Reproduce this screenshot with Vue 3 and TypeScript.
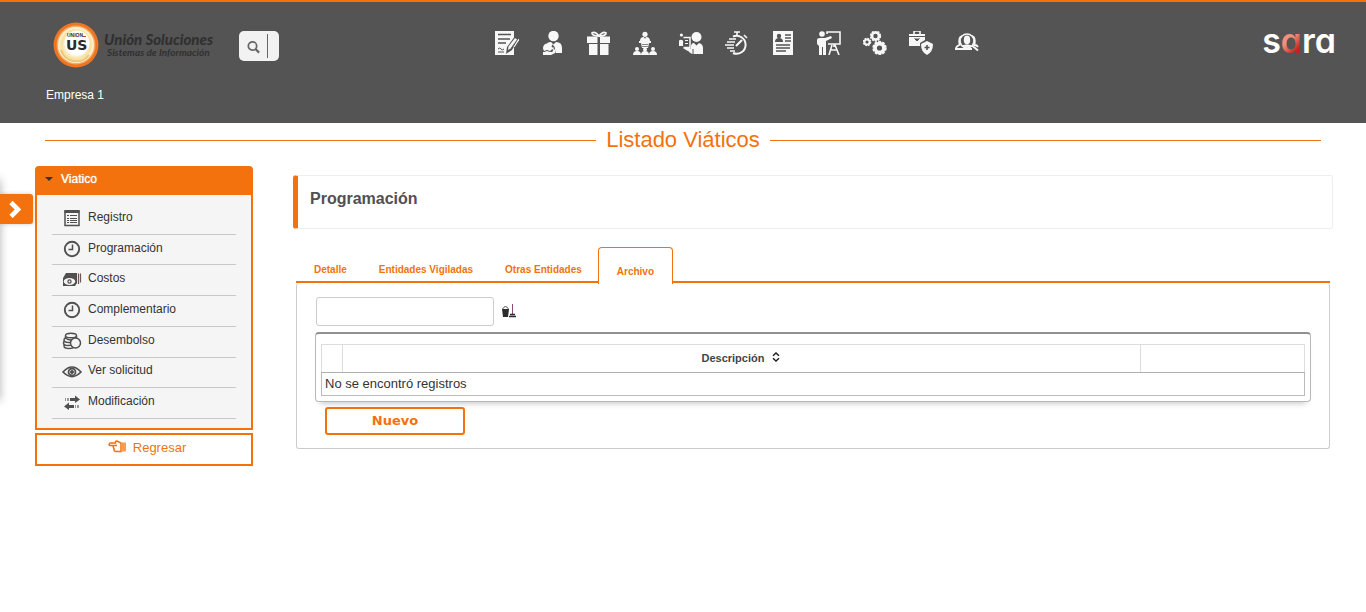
<script setup lang="ts">
import { ref } from 'vue'

interface MenuItem {
  label: string
  icon: string
}

const menu: MenuItem[] = [
  { label: 'Registro', icon: 'list' },
  { label: 'Programación', icon: 'clock' },
  { label: 'Costos', icon: 'bills' },
  { label: 'Complementario', icon: 'clock' },
  { label: 'Desembolso', icon: 'coins' },
  { label: 'Ver solicitud', icon: 'eye' },
  { label: 'Modificación', icon: 'swap' },
]

const modules: string[] = [
  'Contratos', 'Beneficios', 'Bienestar', 'Organización', 'Selección', 'Tiempos',
  'Hoja de vida', 'Capacitación', 'Configuración', 'Seguridad y salud', 'Consultas',
]

const tabs: string[] = ['Detalle', 'Entidades Vigiladas', 'Otras Entidades', 'Archivo']
const active = ref('Archivo')
const query = ref('')
const filter = ref('')
</script>

<template>
  <div class="page">
    <header class="top">
      <div class="bar">
        <a href="#" class="brand" aria-label="Unión Soluciones">
          <svg class="seal" viewBox="0 0 46 46" aria-hidden="true">
            <defs>
              <radialGradient id="seal-glow">
                <stop offset="0.5" stop-color="#fffdf4" />
                <stop offset="0.8" stop-color="#f6dfa0" />
                <stop offset="1" stop-color="#fff6dc" />
              </radialGradient>
            </defs>
            <circle cx="23" cy="23" r="22.5" fill="#ee7623" />
            <circle cx="23" cy="23" r="19.4" fill="#f6ac68" />
            <circle cx="23" cy="23" r="18" fill="url(#seal-glow)" />
            <path d="M8 28a16 16 0 0 0 28 5" fill="none" stroke="#eac877" stroke-width="2" />
            <circle cx="24" cy="21" r="12.5" fill="#fff" />
            <text x="14" y="15" class="seal-small">UNION</text>
            <path d="M30 14.5h3" stroke="#d33" stroke-width="1" />
            <text x="13" y="28" class="seal-big">US</text>
          </svg>
          <span class="brand-text">
            <strong>Unión Soluciones</strong>
            <small>Sistemas de Información</small>
          </span>
        </a>

        <form class="search" @submit.prevent>
          <button type="submit" aria-label="Buscar">
            <svg viewBox="0 0 14 14" aria-hidden="true">
              <circle cx="5.500" cy="6" r="4.200" fill="none" stroke="#666" stroke-width="1.700" />
              <path d="M8.500 9l3.600 3.600" stroke="#666" stroke-width="2.200" />
            </svg>
          </button>
          <input v-model="query" type="text" aria-label="Texto de búsqueda" />
        </form>

        <nav class="modules" aria-label="Módulos">
          <a v-for="(name, i) in modules" :key="name" href="#" :aria-label="name">
            <svg viewBox="0 0 24 24" aria-hidden="true">
              <g v-if="i === 0">
                <path fill="#f7f7f7" d="M0 0h19v24H0z" />
                <path d="M3 3.500h13M3 8h12M3 12h8" stroke="#545454" stroke-width="1.500" />
                <path d="M3 18q2-2 3 0t3 0M3 21h6" fill="none" stroke="#545454" />
                <path d="M20 5l4 2-7 12-6 4 1-7z" fill="#545454" />
                <path d="M20 7l2 1.500-6.500 9L13 19l.5-3.500z" fill="#f7f7f7" />
                <path d="M24 8l-5 8" stroke="#f7f7f7" stroke-width="1.200" />
              </g>
              <g v-else-if="i === 1">
                <circle cx="12.500" cy="5" r="5.200" fill="#f7f7f7" />
                <path d="M5 16q0-5 5-5l2.500 2.500L15 11q6 0 6 6v5h-7l-5-6z" fill="#f7f7f7" />
                <path d="M11 14l2 2 1 6M8 15l4 1" fill="none" stroke="#545454" stroke-width="1.200" />
                <circle cx="6.500" cy="17" r="4.500" fill="#f7f7f7" />
                <path d="M2 21h9l3-3v4l-4 2H2z" fill="#f7f7f7" />
                <path d="M3 20.500q3-2 6 0l3-2" fill="none" stroke="#545454" />
              </g>
              <g v-else-if="i === 2" fill="#f7f7f7">
                <path d="M0 5.500h10.500V12H0zM13 5.500h10V12H13zM2 13h8.500v11H2zM13 13h8.500v11H13z" />
                <path d="M12 5Q5 5 5 2q3-2 7 3 4-5 7-3 0 3-7 3" fill="none" stroke="#f7f7f7" stroke-width="1.800" />
              </g>
              <g v-else-if="i === 3" fill="#f7f7f7">
                <circle cx="12" cy="3.300" r="2.600" />
                <path d="M7 10q0-4 4-4l1 2 1-2q4 0 4 4zM6 10h12v2H6zM8 12h8l-1 5H9z" />
                <circle cx="4" cy="18" r="2" /><circle cx="12" cy="18.500" r="2" /><circle cx="20" cy="18" r="2" />
                <path d="M0 24q0-4 4-4t4 4zM8 24q0-4 4-4t4 4zM16 24q0-4 4-4t4 4z" />
                <path d="M9 13.500h6M9 15.500h6" stroke="#545454" stroke-width="0.700" />
              </g>
              <g v-else-if="i === 4" fill="#f7f7f7">
                <circle cx="17.500" cy="6" r="5" />
                <path d="M12 16q0-4 3-4l2.500 2.500L20 12q4 1 4 5v6H13l-3-2z" />
                <path d="M4.500 6.500H11v10H4.500" fill="none" stroke="#f7f7f7" stroke-width="1.500" />
                <path d="M6 9.500h3M6 12.500h3" stroke="#f7f7f7" />
                <circle cx="2.400" cy="4" r="1.600" />
                <circle cx="2" cy="11" r="2.300" />
                <path d="M0 12h4v3H0zM4 17h7v4l-4-2z" />
                <path d="M14 23v-5" stroke="#545454" />
              </g>
              <g v-else-if="i === 5">
                <path d="M8 5.500a9 9 0 1 1 0 16.500" fill="none" stroke="#f7f7f7" stroke-width="2" />
                <path d="M9 1h6M12 1v4M19 4l3 3M4 8h7M2 11h8M0 14h9M2 17h7M5 20h5" stroke="#f7f7f7" stroke-width="1.600" />
                <path d="M11 15l6-6" stroke="#f7f7f7" stroke-width="2.200" />
              </g>
              <g v-else-if="i === 6">
                <path d="M2 0h20v24H2z" fill="#f7f7f7" />
                <circle cx="8" cy="5" r="2.200" fill="#545454" />
                <path d="M4 11q0-4 4-4t4 4z" fill="#545454" />
                <path d="M14 4h6M14 7h6M14 10h6M5 14h14M5 17h14M5 20h10" stroke="#545454" stroke-width="1.400" />
              </g>
              <g v-else-if="i === 7" fill="#f7f7f7">
                <circle cx="5" cy="3" r="2.800" />
                <path d="M0 9q0-2 3-2h5l6-2 1 2-6 3v14H6v-8H5v8H2V15L0 13z" />
                <path d="M10 3V1h13v12H11M17 13v3M15 14l-3 10M18 14l4 10M13 19h7" fill="none" stroke="#f7f7f7" stroke-width="1.600" />
              </g>
              <g v-else-if="i === 8" fill="none" stroke="#f7f7f7">
                <circle cx="12.500" cy="5" r="3.500" stroke-width="2.600" />
                <circle cx="12.500" cy="5" r="4.900" stroke-width="1.500" stroke-dasharray="2 1.080" />
                <circle cx="4" cy="11" r="2.600" stroke-width="2" />
                <circle cx="4" cy="11" r="3.700" stroke-width="1.200" stroke-dasharray="1.700 1.200" />
                <circle cx="16.500" cy="17" r="4.400" stroke-width="3.600" />
                <circle cx="16.500" cy="17" r="6.400" stroke-width="1.600" stroke-dasharray="2.800 1.220" />
              </g>
              <g v-else-if="i === 9" fill="#f7f7f7">
                <path d="M0 3h16v2H0zM0 6h16v3l-5 3v3H0z" />
                <path d="M5 3V0h6v3" fill="none" stroke="#f7f7f7" stroke-width="1.600" />
                <path d="M5.500 7.500L8 10l2.500-2.500" fill="#545454" stroke="#545454" />
                <path d="M18 10l6 3q0 8-6 11-6-3-6-11z" />
                <path d="M18 14v5M15.500 16.500h5" stroke="#545454" stroke-width="1.600" />
              </g>
              <g v-else fill="#f7f7f7">
                <path d="M1 18q0-3 3.500-4Q3 6 7 5M23 16q-1-2-3.500-2Q21 6 17 5" fill="none" stroke="#f7f7f7" stroke-width="1.800" />
                <circle cx="12" cy="10" r="7" fill="none" stroke="#f7f7f7" stroke-width="1.600" />
                <ellipse cx="12" cy="9" rx="3.200" ry="4.400" />
                <path d="M7 14.500q5-2 10 0-5 4-10 0z" />
                <path d="M0 18h17M17 14.500l6 5" stroke="#f7f7f7" stroke-width="2" />
              </g>
            </svg>
          </a>
        </nav>

        <a href="#" class="sara">s<span>a</span>ra</a>
      </div>
      <p class="company">Empresa 1</p>
    </header>

    <h1 class="title">Listado Viáticos</h1>

    <div class="drawer">
      <button type="button" aria-label="Abrir panel">
        <svg viewBox="0 0 14 18" aria-hidden="true">
          <path d="M2 2.500L9 9.500 2 16.500" fill="none" stroke="#fff" stroke-width="4.600" />
        </svg>
      </button>
    </div>

    <div class="body">
      <aside class="side">
        <h2><span class="caret"></span>Viatico</h2>
        <ul class="menu">
          <li v-for="item in menu" :key="item.label">
            <a href="#">
              <svg viewBox="0 0 20 18" aria-hidden="true">
                <g v-if="item.icon === 'list'" fill="none" stroke="#505050">
                  <path d="M3 2h14v14.500H3z" stroke-width="1.500" />
                  <path d="M2.500 2.500h15" stroke-width="3" />
                  <path d="M5 6.500h2M5 9.500h2M5 11.500h2M5 13.500h2M8 6.500h7M8 9.500h7M8 11.500h7M8 13.500h7" />
                </g>
                <g v-else-if="item.icon === 'clock'" fill="none" stroke="#505050">
                  <circle cx="10" cy="9" r="7.200" stroke-width="1.900" />
                  <path d="M10.500 4.500v5H6.500" stroke-width="1.500" />
                </g>
                <g v-else-if="item.icon === 'bills'">
                  <path d="M1 7l3-5h11v10l-2 3H1z" fill="#505050" />
                  <path d="M16.500 2.500v10.500M18.500 2.500v9" stroke="#705050" stroke-width="1.200" />
                  <ellipse cx="7.500" cy="10.500" rx="5.700" ry="3.400" fill="#f5f5f5" />
                  <circle cx="7.500" cy="10.500" r="1.600" fill="none" stroke="#505050" stroke-width="1.200" />
                </g>
                <g v-else-if="item.icon === 'coins'" fill="#f5f5f5" stroke="#505050" stroke-width="1.500">
                  <ellipse cx="7" cy="14" rx="5" ry="2.500" />
                  <ellipse cx="6" cy="11" rx="4.500" ry="2.500" />
                  <ellipse cx="7" cy="8" rx="5" ry="2.500" />
                  <path d="M3.500 4v2q5 4 11 0V4" />
                  <ellipse cx="9" cy="3.500" rx="5.500" ry="2.300" />
                  <circle cx="13.500" cy="11" r="5" />
                </g>
                <g v-else-if="item.icon === 'eye'" fill="none" stroke="#505050">
                  <path d="M1 9q9-10 18 0-9 9-18 0z" stroke-width="1.700" />
                  <circle cx="10" cy="9" r="3.500" stroke-width="1.800" />
                  <circle cx="10" cy="9" r="1.500" fill="#505050" />
                </g>
                <g v-else fill="#505050">
                  <path d="M8 4h5V1.500L18 5.500 13 9V7H8zM12 11H7V8.500L2 12.500 7 16v-2h5z" />
                  <path d="M3 4h1v3H3zM5 4h2v3H5zM13 11h1v3h-1zM15 11h2v3h-2z" fill="#999" />
                </g>
              </svg>
              {{ item.label }}
            </a>
          </li>
        </ul>
        <button type="button" class="back">
          <svg viewBox="0 0 18 14" aria-hidden="true">
            <path d="M5.500 5.500H1.500Q.5 4 2 3h5.500Q7 1 9 1l4 2v8.500H7.500Q5.500 11 6 8.500 4.500 7 6 5.500h3" fill="none" stroke="#f3720d" stroke-width="1.500" />
            <path d="M15 2.500v9M17 2.500v9" stroke="#f3720d" stroke-width="1.400" />
          </svg>
          Regresar
        </button>
      </aside>

      <main class="main">
        <h2 class="section">Programación</h2>

        <div class="tabs" role="tablist">
          <button
            v-for="tab in tabs"
            :key="tab"
            type="button"
            role="tab"
            :aria-selected="active === tab"
            :class="{ on: active === tab }"
            @click="active = tab"
          >{{ tab }}</button>
        </div>

        <section class="panel">
          <div class="tools">
            <input v-model="filter" type="text" aria-label="Filtro" />
            <button type="button" aria-label="Limpiar" @click="filter = ''">
              <svg viewBox="0 0 16 16" aria-hidden="true">
                <path d="M1 5h7l-1 8H2z" fill="#2c2c2c" />
                <path d="M1.500 5q3-5 6 0" fill="none" stroke="#555" />
                <path d="M11.500 0v10" stroke="#8a4a78" />
                <path d="M9 10.500h5M8 12.500h7" stroke="#2c2c2c" stroke-width="1.300" />
              </svg>
            </button>
          </div>

          <div class="grid">
            <table>
              <colgroup>
                <col class="narrow" />
                <col />
                <col class="actions" />
              </colgroup>
              <thead>
                <tr>
                  <th></th>
                  <th>
                    Descripción
                    <svg viewBox="0 0 8 10" aria-hidden="true">
                      <path d="M1 3.800L4 1l3 2.800M1 6.200L4 9l3-2.800" fill="none" stroke="#222" stroke-width="1.500" />
                    </svg>
                  </th>
                  <th></th>
                </tr>
              </thead>
              <tbody>
                <tr>
                  <td colspan="3">No se encontró registros</td>
                </tr>
              </tbody>
            </table>
          </div>

          <button type="button" class="new">Nuevo</button>
        </section>
      </main>
    </div>
  </div>
</template>

<style>
body {
  margin: 0;
  background: #fff;
}
</style>

<style scoped>
* {
  box-sizing: border-box;
}
.page {
  position: relative;
  font: 12px/16px "Liberation Sans", Arial, sans-serif;
  color: #333;
}
button,
input {
  font: inherit;
  margin: 0;
  padding: 0;
  border: 0;
  background: none;
}
button {
  cursor: pointer;
}
a {
  color: inherit;
  text-decoration: none;
}
svg {
  display: block;
}
.top {
  border-top: 2px solid #f3720d;
  background: #545454;
  padding: 20px 30px 20px 46px;
}
.bar {
  display: flex;
  align-items: flex-start;
  height: 65px;
}
.brand {
  display: flex;
  align-items: center;
  gap: 5px;
  width: 185px;
  margin-left: 7px;
}
.seal {
  flex: none;
  width: 46px;
  height: 46px;
}
.seal-small {
  font: bold 5px "Liberation Sans", sans-serif;
  fill: #333;
}
.seal-big {
  font: bold 14px "DejaVu Sans", sans-serif;
  fill: #2b2b2b;
}
.brand-text {
  display: flex;
  flex-direction: column;
  font-family: Lato, sans-serif;
  font-style: italic;
  font-weight: 700;
  color: #303030;
  white-space: nowrap;
}
.brand-text strong {
  font-size: 15px;
  line-height: 15px;
}
.brand-text small {
  font-size: 10px;
  line-height: 11px;
  padding-left: 3px;
}
.search {
  display: flex;
  align-items: center;
  width: 40px;
  height: 30px;
  margin-top: 9px;
  margin-left: 1px;
  border-radius: 5px;
  background: #f2f2f2;
}
.search button {
  width: 28px;
  padding: 2px 0 0 8px;
}
.search svg {
  width: 14px;
  height: 14px;
}
.search input {
  width: 8px;
  height: 24px;
  border-left: 1px solid #666;
}
.modules {
  display: flex;
  gap: 22px;
  margin: 9px 0 0 216px;
}
.modules svg {
  width: 24px;
  height: 24px;
}
.sara {
  margin-left: auto;
  font: 600 34px/38px Inter, sans-serif;
  font-feature-settings: "cv11";
  color: #fff;
}
.sara span {
  background: linear-gradient(135deg, #f4907a 45%, #c4201f 75%);
  background-clip: text;
  color: transparent;
}
.company {
  margin: 0;
  color: #fff;
}
.title {
  display: flex;
  align-items: center;
  gap: 10px;
  margin: 0;
  padding: 4px 45px;
  font-size: 22px;
  line-height: 26px;
  font-weight: 400;
  color: #f3720d;
}
.title::before,
.title::after {
  content: "";
  flex: 1;
  height: 1px;
  background: #f3720d;
}
.drawer {
  position: absolute;
  top: 180px;
  left: 0;
  height: 220px;
  padding-top: 14px;
}
.drawer::before {
  content: "";
  position: absolute;
  top: 0;
  left: -20px;
  width: 20px;
  height: 220px;
  box-shadow: 0 0 10px rgba(0, 0, 0, 0.3);
}
.drawer button {
  position: relative;
  display: flex;
  align-items: center;
  width: 33px;
  height: 30px;
  padding-left: 9px;
  border-radius: 0 3px 3px 0;
  background: #f3720d;
  box-shadow: 0 0 4px rgba(0, 0, 0, 0.2);
}
.drawer svg {
  width: 14px;
  height: 18px;
}
.body {
  display: flex;
  gap: 40px;
  padding: 9px 33px 20px 35px;
}
.side {
  flex: 0 0 218px;
}
.side h2 {
  display: flex;
  align-items: center;
  gap: 8px;
  margin: 0;
  padding: 5px 10px 8px;
  border-radius: 4px 4px 0 0;
  background: #f3720d;
  color: #fff;
  font-size: 12px;
  line-height: 16px;
  font-weight: 400;
  text-shadow: 0 0 1px #fff;
}
.caret {
  border: 4px solid transparent;
  border-top-color: #333;
  border-bottom: 0;
}
.menu {
  display: grid;
  grid-auto-rows: 1fr;
  min-height: 235px;
  margin: 0 0 3px;
  padding: 9px 15px;
  list-style: none;
  border: 2px solid #f3720d;
  border-top: 0;
  background: #f5f5f5;
}
.menu li {
  display: grid;
  border-bottom: 1px solid #c8c8c8;
}
.menu a {
  display: flex;
  align-items: center;
  gap: 6px;
  padding: 0 0 4px 10px;
}
.menu svg {
  width: 20px;
  height: 18px;
  margin-top: 3px;
}
.back {
  display: flex;
  justify-content: center;
  gap: 7px;
  width: 100%;
  height: 33px;
  padding: 5px 0 5px 6px;
  border: 2px solid #f3720d;
  background: #fff;
  color: #f3720d;
  font-size: 13px;
}
.back svg {
  width: 18px;
  height: 14px;
}
.main {
  flex: 1;
  min-width: 0;
  padding-top: 9px;
}
.section {
  margin: 0;
  padding: 13px 12px 20px;
  border: 1px solid #eee;
  border-left: 5px solid #f3720d;
  border-radius: 3px;
  font-size: 16px;
  line-height: 19px;
  color: #505050;
}
.tabs {
  display: flex;
  align-items: flex-end;
  height: 36px;
  margin: 18px 3px 0;
  padding-left: 2px;
  border-bottom: 2px solid #f3720d;
}
.tabs button {
  padding: 0 16px 5px;
  font-size: 10px;
  line-height: 12px;
  font-weight: 700;
  color: #f3720d;
}
.tabs .on {
  margin-bottom: -3px;
  padding: 18px 18px 6px;
  border: 1px solid #f3720d;
  border-bottom: 0;
  border-radius: 4px 4px 0 0;
  background: #fff;
}
.panel {
  margin: 0 3px;
  padding: 14px 18px 13px;
  border: 1px solid #ccc;
  border-top: 0;
  border-radius: 3px;
}
.tools {
  display: flex;
  align-items: center;
  gap: 7px;
  padding-left: 1px;
}
.tools input {
  width: 178px;
  height: 29px;
  padding: 0 6px;
  border: 1px solid #ccc;
  border-radius: 3px;
}
.tools svg {
  width: 16px;
  height: 16px;
}
.grid {
  margin-top: 6px;
  padding: 10px 5px 5px;
  border: 1px solid #b8b8b8;
  border-top: 2px solid #909090;
  border-radius: 4px;
  box-shadow: 0 6px 6px -5px rgba(0, 0, 0, 0.25);
}
table {
  width: 100%;
  table-layout: fixed;
  border-collapse: collapse;
}
.narrow {
  width: 21px;
}
.actions {
  width: 164px;
}
th {
  height: 28px;
  padding: 0 2px 2px 0;
  border: 1px solid #ddd;
  font-size: 11px;
  line-height: 14px;
  color: #444;
}
thead tr {
  border-bottom: 1px solid #b0b0b0;
}
th:not(:empty),
th:empty {
  border-bottom-color: #b0b0b0;
}
th svg {
  display: inline-block;
  width: 8px;
  height: 10px;
  margin-left: 4px;
}
td {
  height: 23px;
  padding: 0 3px;
  border: 1px solid #bbb;
  font-size: 13px;
}
.new {
  display: block;
  width: 140px;
  height: 28px;
  margin: 5px 0 0 10px;
  border: 2px solid #f3720d;
  border-radius: 3px;
  background: #fff;
  color: #f3720d;
  font: bold 13px/20px "DejaVu Sans", Verdana, sans-serif;
}
</style>
